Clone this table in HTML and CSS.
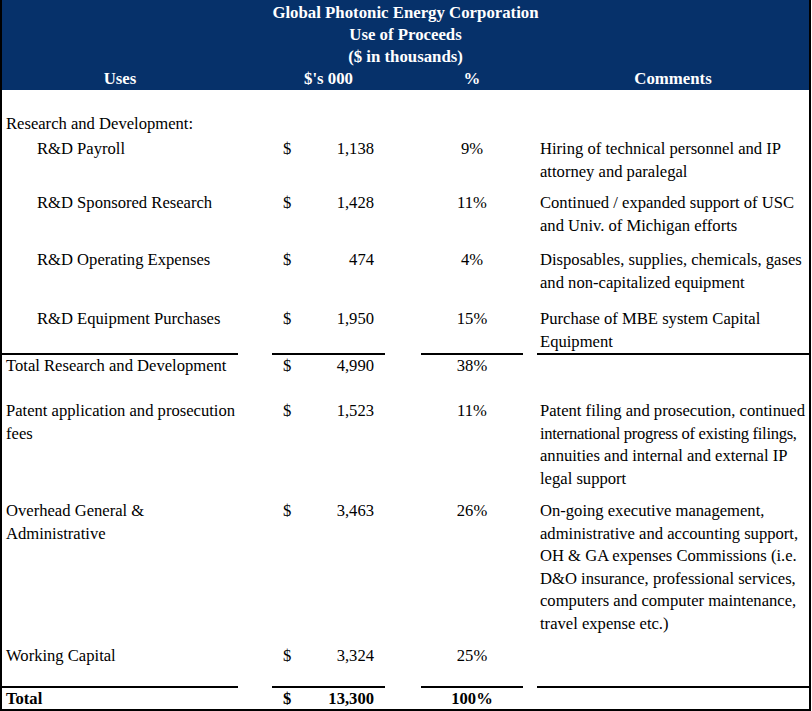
FILE: index.html
```html
<!DOCTYPE html>
<html>
<head>
<meta charset="utf-8">
<title>Use of Proceeds</title>
<link rel="stylesheet" href="styles.css">
</head>
<body>
<div class="sheet">
  <div class="head">
    <div class="title">Global Photonic Energy Corporation</div>
    <div class="title">Use of Proceeds</div>
    <div class="title">($ in thousands)</div>
    <div class="row colheads">
      <div class="c-uses">Uses</div>
      <div class="c-amt center">$'s 000</div>
      <div class="c-pct">%</div>
      <div class="c-com center">Comments</div>
    </div>
  </div>

  <div class="body">
    <div class="row h-spacer"></div>
    <div class="row h-rdhead">
      <div class="c-uses">Research and Development:</div>
    </div>
    <div class="row h-payroll">
      <div class="c-uses indent">R&amp;D Payroll</div>
      <div class="c-amt"><span>$</span><span>1,138</span></div>
      <div class="c-pct">9%</div>
      <div class="c-com">Hiring of technical personnel and IP<br>attorney and paralegal</div>
    </div>
    <div class="row h-sponsored">
      <div class="c-uses indent">R&amp;D Sponsored Research</div>
      <div class="c-amt"><span>$</span><span>1,428</span></div>
      <div class="c-pct">11%</div>
      <div class="c-com">Continued / expanded support of USC<br>and Univ. of Michigan efforts</div>
    </div>
    <div class="row h-operating">
      <div class="c-uses indent">R&amp;D Operating Expenses</div>
      <div class="c-amt"><span>$</span><span>474</span></div>
      <div class="c-pct">4%</div>
      <div class="c-com">Disposables, supplies, chemicals, gases<br>and non-capitalized equipment</div>
    </div>
    <div class="row h-equip">
      <div class="c-uses indent">R&amp;D Equipment Purchases</div>
      <div class="c-amt"><span>$</span><span>1,950</span></div>
      <div class="c-pct">15%</div>
      <div class="c-com">Purchase of MBE system Capital<br>Equipment</div>
    </div>
    <div class="row ruled h-totalrd">
      <div class="c-uses">Total Research and Development</div>
      <div class="c-amt"><span>$</span><span>4,990</span></div>
      <div class="c-pct">38%</div>
      <div class="c-com"></div>
    </div>
    <div class="row h-patent">
      <div class="c-uses">Patent application and prosecution<br>fees</div>
      <div class="c-amt"><span>$</span><span>1,523</span></div>
      <div class="c-pct">11%</div>
      <div class="c-com">Patent filing and prosecution, continued<br><span class="tight">international progress of existing filings,</span><br>annuities and internal and external IP<br>legal support</div>
    </div>
    <div class="row h-overhead">
      <div class="c-uses">Overhead General &amp;<br>Administrative</div>
      <div class="c-amt"><span>$</span><span>3,463</span></div>
      <div class="c-pct">26%</div>
      <div class="c-com">On-going executive management,<br>administrative and accounting support,<br>OH &amp; GA expenses Commissions (i.e.<br>D&amp;O insurance, professional services,<br>computers and computer maintenance,<br>travel expense etc.)</div>
    </div>
    <div class="row h-wc">
      <div class="c-uses">Working Capital</div>
      <div class="c-amt"><span>$</span><span>3,324</span></div>
      <div class="c-pct">25%</div>
      <div class="c-com"></div>
    </div>
    <div class="row ruled total h-total">
      <div class="c-uses">Total</div>
      <div class="c-amt"><span>$</span><span>13,300</span></div>
      <div class="c-pct">100%</div>
      <div class="c-com"></div>
    </div>
  </div>
</div>
</body>
</html>
```

FILE: styles.css
```css
html, body {
  margin: 0;
  padding: 0;
  background: #ffffff;
}

.sheet {
  width: 807px;
  border-left: 2px solid #000;
  border-right: 2px solid #000;
  border-bottom: 2px solid #000;
  font-family: "Liberation Serif", "Times New Roman", serif;
  font-size: 16.6px;
  color: #000;
}

.head {
  background: #06316a;
  color: #ffffff;
  font-weight: bold;
  font-size: 16.8px;
  padding-top: 2px;
  height: 88px;
}

.title {
  height: 22px;
  line-height: 22px;
  text-align: center;
}

.row {
  display: grid;
  grid-template-columns: 236px 147px 138px 286px;
  line-height: 22.6px;
  align-items: start;
}

.colheads {
  height: 22px;
  line-height: 22px;
}

.colheads > div {
  text-align: center;
}

.c-uses {
  padding-left: 4px;
  white-space: nowrap;
}

.colheads .c-uses {
  padding-left: 0;
}

.c-uses.indent {
  padding-left: 35px;
}

.c-amt {
  margin-left: 34px;
  padding: 0 11px;
  display: flex;
  justify-content: space-between;
}

.c-amt.center {
  justify-content: center;
}

.c-pct {
  margin-left: 36px;
  text-align: center;
}

.c-com {
  margin-left: 14px;
  padding-left: 3px;
  white-space: nowrap;
}

.c-com.center {
  padding-left: 0;
}

.tight {
  letter-spacing: -0.3px;
}

.ruled > div {
  border-top: 2px solid #000;
  align-self: stretch;
}

.total {
  font-weight: bold;
}

.h-spacer { height: 23px; }
.h-rdhead { height: 25px; }
.h-payroll { height: 54px; }
.h-sponsored { height: 57px; }
.h-operating { height: 59px; }
.h-equip { height: 45px; }
.h-totalrd { height: 47px; }
.h-patent { height: 100px; }
.h-overhead { height: 145px; }
.h-wc { height: 41px; }
.h-total { height: 23px; }
```
